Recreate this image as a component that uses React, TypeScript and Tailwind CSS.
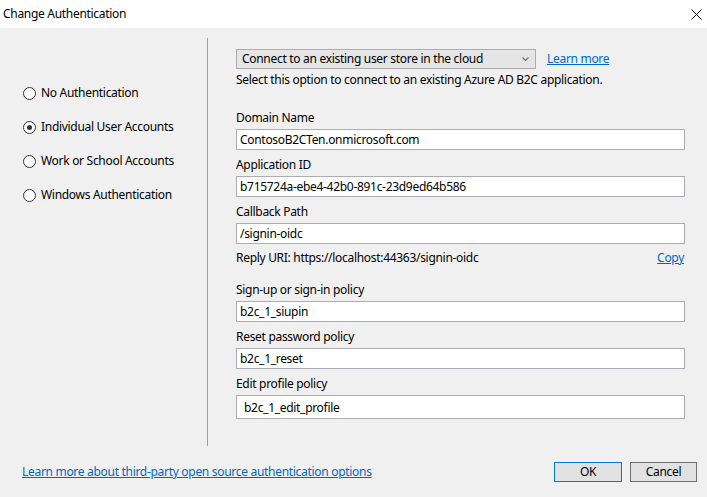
import { useState } from "react";

type Field = {
  label: string;
  value: string;
};

const topFields: Field[] = [
  { label: "Domain Name", value: "ContosoB2CTen.onmicrosoft.com" },
  { label: "Application ID", value: "b715724a-ebe4-42b0-891c-23d9ed64b586" },
  { label: "Callback Path", value: "/signin-oidc" },
];

const policyFields: Field[] = [
  { label: "Sign-up or sign-in policy", value: "b2c_1_siupin" },
  { label: "Reset password policy", value: "b2c_1_reset" },
];

const authOptions = [
  "No Authentication",
  "Individual User Accounts",
  "Work or School Accounts",
  "Windows Authentication",
];

function TextField({ field }: { field: Field }) {
  return (
    <div className="flex flex-col">
      <div className="h-[16px] leading-[16px]">{field.label}</div>
      <input
        className="mt-[3px] h-[21px] w-[449px] border border-[#abadb3] bg-white px-[3px] leading-[19px] text-black outline-none"
        defaultValue={field.value}
        readOnly
      />
    </div>
  );
}

function Radio({ label, checked, onSelect }: { label: string; checked: boolean; onSelect: () => void }) {
  return (
    <div className="flex h-[16px] items-center cursor-default" onClick={onSelect}>
      <span className="flex h-[13px] w-[13px] items-center justify-center rounded-full border border-[#333333] bg-white">
        {checked && <span className="h-[5px] w-[5px] rounded-full bg-[#333333]" />}
      </span>
      <span className="ml-[5px] leading-[16px]">{label}</span>
    </div>
  );
}

export default function App() {
  const [selected, setSelected] = useState(1);

  return (
    <div className="flex h-[497px] w-[707px] flex-col bg-[#f0f0f0] font-['Noto_Sans',sans-serif] text-[12px] tracking-[-0.3px] text-black">
      {/* title bar */}
      <div className="flex h-[28px] items-center justify-between bg-white pl-[3px] pr-[4px]">
        <span className="leading-[16px]">Change Authentication</span>
        <svg width="11" height="11" viewBox="0 0 11 11" className="mr-[1px]">
          <path d="M0.5 0.5 L10.5 10.5 M10.5 0.5 L0.5 10.5" stroke="#111" strokeWidth="1" />
        </svg>
      </div>

      <div className="mt-[10px] flex h-[408px]">
        {/* left: auth type */}
        <div className="flex w-[208px] flex-col gap-[18px] border-r border-[#a0a0a0] pl-[23px] pt-[47px]">
          {authOptions.map((opt, i) => (
            <Radio key={opt} label={opt} checked={selected === i} onSelect={() => setSelected(i)} />
          ))}
        </div>

        {/* right: options */}
        <div className="flex flex-col pl-[28px] pt-[11px]">
          <div className="flex items-center">
            <div className="flex h-[20px] w-[300px] items-center justify-between border border-[#acacac] bg-[#e5e5e5] pl-[5px] pr-[6px]">
              <span className="leading-[16px]">Connect to an existing user store in the cloud</span>
              <svg width="7" height="5" viewBox="0 0 7 5">
                <path d="M0.5 0.5 L3.5 3.5 L6.5 0.5" fill="none" stroke="#707070" strokeWidth="1.2" />
              </svg>
            </div>
            <a className="ml-[11px] text-[#0066cc] underline leading-[16px]">Learn more</a>
          </div>
          <div className="mt-[3px] h-[16px] leading-[16px]">
            Select this option to connect to an existing Azure AD B2C application.
          </div>

          <div className="mt-[22px] flex flex-col gap-[7px]">
            {topFields.map((f) => (
              <TextField key={f.label} field={f} />
            ))}
          </div>

          <div className="mt-[6px] flex h-[16px] w-[449px] items-center justify-between leading-[16px]">
            <span>Reply URI: https://localhost:44363/signin-oidc</span>
            <a className="mr-[1px] text-[#0066cc] underline">Copy</a>
          </div>

          <div className="mt-[16px] flex flex-col gap-[7px]">
            {policyFields.map((f) => (
              <TextField key={f.label} field={f} />
            ))}
            <div className="flex flex-col">
              <div className="h-[16px] leading-[16px]">Edit profile policy</div>
              <input
                className="mt-[3px] h-[24px] w-[449px] border border-[#abadb3] bg-white px-[7px] text-black outline-none"
                defaultValue="b2c_1_edit_profile"
                readOnly
              />
            </div>
          </div>
        </div>
      </div>

      {/* footer */}
      <div className="flex items-center justify-between pl-[22px] pr-[10px] pt-[16px]">
        <a className="text-[#0066cc] underline leading-[16px]">
          Learn more about third-party open source authentication options
        </a>
        <div className="flex gap-[8px]">
          <button className="h-[20px] w-[68px] border border-[#0078d7] bg-[#e1e1e1] leading-[16px]">OK</button>
          <button className="h-[20px] w-[67px] border border-[#707070] bg-[#e1e1e1] leading-[16px]">Cancel</button>
        </div>
      </div>
    </div>
  );
}
